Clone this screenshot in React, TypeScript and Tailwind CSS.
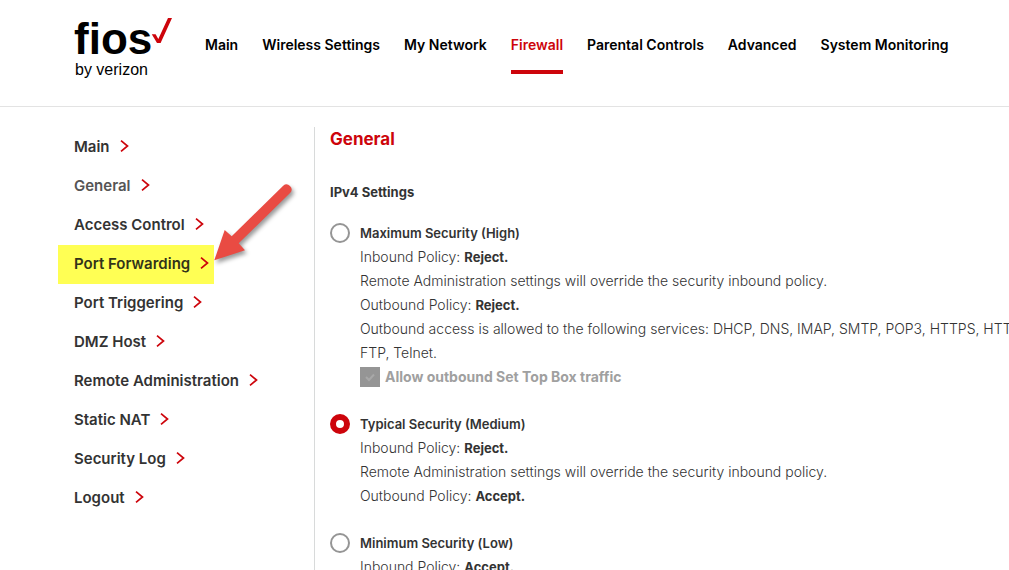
import type { ReactNode } from "react";

const navItems = ["Main", "Wireless Settings", "My Network", "Firewall", "Parental Controls", "Advanced", "System Monitoring"];

const sideItems = [
  "Main",
  "General",
  "Access Control",
  "Port Forwarding",
  "Port Triggering",
  "DMZ Host",
  "Remote Administration",
  "Static NAT",
  "Security Log",
  "Logout",
];

function Logo() {
  return (
    <a
      href="#home"
      aria-label="fios by verizon"
      className="flex w-[131px] shrink-0 flex-col pt-[17px] font-['Liberation_Sans',Arial,sans-serif] text-black"
    >
      <span className="flex h-[44px] items-start">
        <span className="text-[44px] leading-[44px] font-bold">fios</span>
        <svg className="-ml-px h-[27px] w-[22px] shrink-0" viewBox="0 0 22 27" aria-hidden="true">
          <path d="M.8 17.300 4.600 17.300 7.300 22 17 1 21 1 9.600 26 6 26Z" fill="#cd040b" />
        </svg>
      </span>
      <span className="pl-px text-base leading-[18px]">by verizon</span>
    </a>
  );
}

function Chevron() {
  return (
    <svg className="mb-1 h-3 w-[9px] shrink-0" viewBox="0 0 9 12" aria-hidden="true">
      <path d="M1 .7 7.500 6 1 11.300" fill="none" stroke="#cd040b" strokeWidth="1.700" />
    </svg>
  );
}

function Arrow() {
  return (
    <svg className="pointer-events-none absolute top-[-65px] left-full h-[88px] w-[84px]" viewBox="0 0 84 88" aria-hidden="true">
      <path
        d="M0.300 80.300 10.700 50 17.700 56.300 69.200 5.800A5 5 0 0 1 76.300 12.800L24.700 63.300 31 70.300Z"
        fill="#e94b43"
        className="drop-shadow-[2px_3px_2px_rgba(0,0,0,0.4)]"
      />
    </svg>
  );
}

function Option({ id, title, checked, children }: { id: string; title: string; checked?: boolean; children: ReactNode }) {
  return (
    <div className="flex items-start gap-2.5">
      <input
        id={id}
        type="radio"
        name="ipv4"
        defaultChecked={checked}
        className="mt-0.5 size-5 shrink-0 appearance-none rounded-full border-2 border-[#959595] bg-white checked:border-[6px] checked:border-[#cd040b]"
      />
      <div className="text-[14px] leading-6 font-light whitespace-nowrap">
        <label htmlFor={id} className="block text-[13px] leading-6 font-semibold">
          {title}
        </label>
        {children}
      </div>
    </div>
  );
}

function Policy({ name, value }: { name: string; value: string }) {
  return (
    <p>
      {name} Policy: <b className="text-[13px] leading-none font-bold">{value}</b>
    </p>
  );
}

export default function App() {
  return (
    <div className="h-screen overflow-hidden bg-white font-[Inter,sans-serif] text-[#333]">
      <header className="flex h-[107px] border-b border-[#e3e3e3] pl-[74px]">
        <Logo />
        <nav className="flex items-start gap-6 pt-[34px]">
          {navItems.map((item) => (
            <a
              key={item}
              href="#nav"
              className={
                item === "Firewall"
                  ? "border-b-4 border-[#cd040b] pb-[14px] text-sm leading-[22px] font-semibold whitespace-nowrap text-[#cd040b]"
                  : "text-sm leading-[22px] font-semibold whitespace-nowrap text-black"
              }
            >
              {item}
            </a>
          ))}
        </nav>
      </header>
      <div className="flex pt-5 pl-[58px]">
        <aside className="w-[256px] shrink-0 pt-px">
          <ul>
            {sideItems.map((item) => (
              <li key={item} className="flex">
                <a
                  href="#section"
                  className={
                    item === "Port Forwarding"
                      ? "relative flex h-[39px] items-center gap-2.5 bg-[#ffff54] pr-[5px] pl-4 text-[15px] font-semibold text-[#333319]"
                      : item === "General"
                        ? "flex h-[39px] items-center gap-2.5 pl-4 text-[15px] font-semibold text-[#555]"
                        : "flex h-[39px] items-center gap-2.5 pl-4 text-[15px] font-semibold"
                  }
                >
                  {item}
                  <Chevron />
                  {item === "Port Forwarding" && <Arrow />}
                </a>
              </li>
            ))}
          </ul>
        </aside>
        <main className="min-w-0 flex-1 border-l border-[#d8dada] pb-10 pl-[15px]">
          <h1 className="text-[17px] leading-6 font-bold text-[#cd040b]">General</h1>
          <h2 className="mt-[29px] text-[13px] leading-6 font-bold">IPv4 Settings</h2>
          <div className="mt-[17px] flex flex-col gap-[23px]">
            <Option id="maximum" title="Maximum Security (High)">
              <Policy name="Inbound" value="Reject." />
              <p>Remote Administration settings will override the security inbound policy.</p>
              <Policy name="Outbound" value="Reject." />
              <p>
                Outbound access is allowed to the following services: DHCP, DNS, IMAP, SMTP, POP3, HTTPS, HTTP,
                <br />
                FTP, Telnet.
              </p>
              <label className="flex h-6 items-center gap-[5px] text-sm font-bold text-[#a0a0a0]">
                <span className="grid size-5">
                  <input type="checkbox" defaultChecked disabled className="col-start-1 row-start-1 size-5 appearance-none bg-[#959595]" />
                  <svg className="col-start-1 row-start-1 size-5" viewBox="0 0 20 20" aria-hidden="true">
                    <path d="M6 10 9 13 14 7.500" fill="none" stroke="#a8a8a8" strokeWidth="2" />
                  </svg>
                </span>
                Allow outbound Set Top Box traffic
              </label>
            </Option>
            <Option id="typical" title="Typical Security (Medium)" checked>
              <Policy name="Inbound" value="Reject." />
              <p>Remote Administration settings will override the security inbound policy.</p>
              <Policy name="Outbound" value="Accept." />
            </Option>
            <Option id="minimum" title="Minimum Security (Low)">
              <Policy name="Inbound" value="Accept." />
            </Option>
          </div>
        </main>
      </div>
    </div>
  );
}
